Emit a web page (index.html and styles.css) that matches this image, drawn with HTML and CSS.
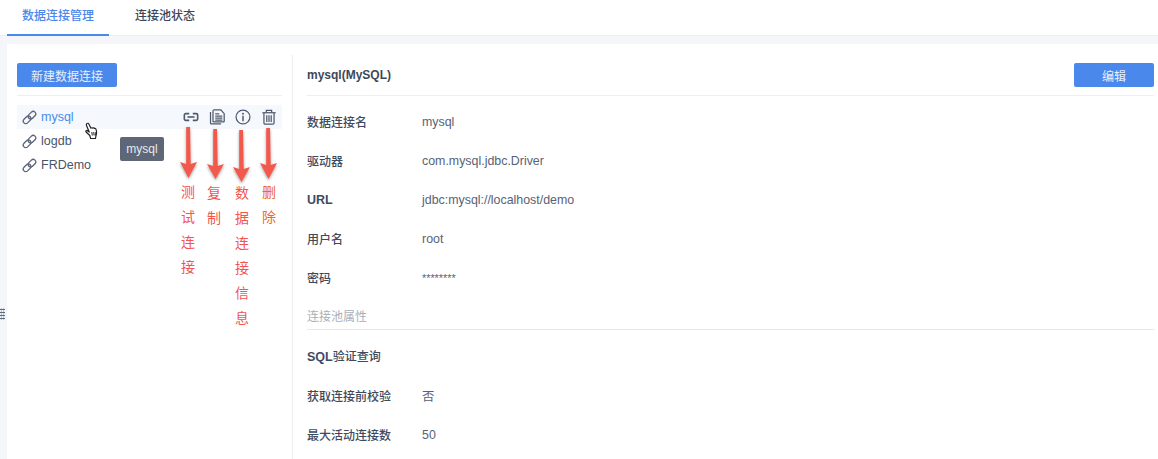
FILE: index.html
```html
<!DOCTYPE html>
<html lang="zh">
<head>
<meta charset="utf-8">
<title>数据连接管理</title>
<link rel="stylesheet" href="styles.css">
</head>
<body>
<svg class="defs" width="0" height="0" aria-hidden="true">
  <defs>
    <symbol id="chain" viewBox="0 0 16 16">
      <g fill="none" stroke="currentColor" stroke-width="1.400">
        <rect x="0.800" y="7.800" width="9.200" height="5.400" rx="2.700" transform="rotate(-45 5.400 10.500)"/>
        <rect x="6" y="2.800" width="9.200" height="5.400" rx="2.700" transform="rotate(-45 10.600 5.500)"/>
      </g>
    </symbol>
    <filter id="soft" x="-60%" y="-20%" width="220%" height="140%">
      <feDropShadow dx="0" dy="1.500" stdDeviation="1.500" flood-color="#555" flood-opacity=".6"/>
    </filter>
  </defs>
</svg>

<nav class="tabs">
  <a class="tab tab-active">数据连接管理</a>
  <a class="tab">连接池状态</a>
</nav>

<main class="page">
  <span class="grip" aria-hidden="true"></span>
  <section class="sidebar">
    <div class="side-head">
      <button class="btn btn-new">新建数据连接</button>
    </div>
    <ul class="conn-list">
      <li class="conn conn-active">
        <svg class="chain"><use href="#chain"/></svg>
        <span class="conn-name">mysql</span>
        <span class="actions">
          <svg class="act" viewBox="0 0 18 18"><g fill="none" stroke="currentColor" stroke-width="1.800"><path d="M7 5.200H3a1.500 1.500 0 0 0-1.500 1.500v4.600A1.500 1.500 0 0 0 3 12.800h4"/><path d="M11 5.200h4a1.500 1.500 0 0 1 1.500 1.500v4.600a1.500 1.500 0 0 1-1.500 1.500h-4"/><path d="M5 9h8"/></g></svg>
          <svg class="act" viewBox="0 0 18 18"><g fill="none" stroke="currentColor" stroke-width="1.400"><path d="M1.700 3.500v12.300a1 1 0 0 0 1 1H13.500"/><path d="M4.500 1.300v12.500a.8.8 0 0 0 .8.8h11a.8.8 0 0 0 .8-.8V5.200L13.300 1H4.800"/><path d="M7 5.500h4.500M7 8h8M7 10.300h8M7 12.500h8" stroke-width="1.300"/></g></svg>
          <svg class="act" viewBox="0 0 18 18"><circle cx="9" cy="9" r="7.800" fill="none" stroke="currentColor" stroke-width="1.400"/><circle cx="9" cy="5.300" r="1.100" fill="currentColor"/><path d="M9 7.700v6" stroke="currentColor" stroke-width="1.700"/></svg>
          <svg class="act" viewBox="0 0 18 18"><g fill="none" stroke="currentColor" stroke-width="1.400"><path d="M1.500 4.200h15"/><path d="M6 4V1.500h6V4"/><path d="M3.300 4.500v11.300a1.300 1.300 0 0 0 1.300 1.300h8.800a1.300 1.300 0 0 0 1.300-1.300V4.500"/><path d="M6.500 7v7.500M9 7v7.500M11.500 7v7.500"/></g></svg>
        </span>
      </li>
      <li class="conn">
        <svg class="chain"><use href="#chain"/></svg>
        <span class="conn-name">logdb</span>
      </li>
      <li class="conn">
        <svg class="chain"><use href="#chain"/></svg>
        <span class="conn-name">FRDemo</span>
      </li>
    </ul>
  </section>

  <section class="detail">
    <header class="detail-head">
      <h2 class="detail-title">mysql(MySQL)</h2>
      <button class="btn btn-edit">编辑</button>
    </header>
    <dl class="fields">
      <div class="field"><dt>数据连接名</dt><dd>mysql</dd></div>
      <div class="field"><dt>驱动器</dt><dd>com.mysql.jdbc.Driver</dd></div>
      <div class="field"><dt><b class="latin">URL</b></dt><dd>jdbc:mysql://localhost/demo</dd></div>
      <div class="field"><dt>用户名</dt><dd>root</dd></div>
      <div class="field"><dt>密码</dt><dd class="mask">********</dd></div>
    </dl>
    <h3 class="section-title">连接池属性</h3>
    <dl class="fields">
      <div class="field field-first"><dt><b class="latin">SQL</b>验证查询</dt><dd></dd></div>
      <div class="field"><dt>获取连接前校验</dt><dd>否</dd></div>
      <div class="field"><dt>最大活动连接数</dt><dd>50</dd></div>
    </dl>
  </section>
</main>

<div class="tooltip">mysql</div>

<svg class="cursor" viewBox="0 0 14 18" aria-hidden="true">
  <path d="M1.800 1.600c.8-.7 1.800-.3 2.200.6l1.900 4c.5-.6 1.400-.6 1.800 0 .5-.5 1.400-.4 1.800.3.600-.3 1.300 0 1.500.7.700 2 .8 4 .1 5.800l-.6 3.500H5.700L4.800 13.500 1.100 10c-.7-.9.400-2 1.400-1.200l1.700 1.300L1.500 3.600c-.2-.8-.2-1.500.3-2z" fill="#fff" stroke="#222" stroke-width="1.200" stroke-linejoin="round"/>
  <path d="M6.800 10l.5 3.500M8.800 10l.3 3.500M10.800 10.200l-.1 3.300" stroke="#222" stroke-width="1"/>
</svg>

<svg class="arrows" viewBox="0 0 110 62" aria-hidden="true">
  <g fill="#f3594d" filter="url(#soft)">
    <path d="M6.200 1H10l.7 37 6.300-2L8.500 52 0 36l6.200 2z"/>
    <path d="M33.200 3H37l.7 37 6.300-2-8.500 15L27 38l6.200 2z"/>
    <path d="M59.200 4H63l.7 39 6.300-2-8.500 15L53 41l6.200 2z"/>
    <path d="M86.200 2H90l.7 37 6.300-2-8.500 16L80 37l6.200 2z"/>
  </g>
</svg>

<div class="note note-a">测试连接</div>
<div class="note note-b">复制</div>
<div class="note note-c">数据连接信息</div>
<div class="note note-d">删除</div>
</body>
</html>
```

FILE: styles.css
```css
* { box-sizing: border-box; }
html, body { margin: 0; height: 100%; }
body {
  position: relative;
  width: 1158px;
  height: 459px;
  overflow: hidden;
  background: #f5f6f9;
  color: #4a5468;
  font-family: "Liberation Sans", "Noto Sans CJK SC", sans-serif;
  font-size: 13px;
}
.defs { position: absolute; }

.tabs {
  display: flex;
  height: 36px;
  padding-left: 7px;
  background: #fff;
  border-bottom: 1px solid #eceef2;
}
.tab {
  display: block;
  height: 36px;
  padding: 0 15px 0 16px;
  margin-right: 10px;
  line-height: 32px;
  font-size: 12px;
  color: #3c4658;
  font-weight: 500;
}
.tab-active {
  width: 102px;
  padding: 0 0 0 15px;
  color: #4a88ec;
  border-bottom: 2px solid #4a88ec;
}

.page {
  display: flex;
  height: 415px;
  margin: 8px 0 0 7px;
  background: #fff;
  overflow: hidden;
}
.grip {
  position: absolute;
  left: 0;
  top: 308px;
  width: 5px;
  height: 12px;
  background-image: radial-gradient(circle, #5f6b80 0.9px, transparent 1.1px);
  background-size: 2.500px 3px;
}

.sidebar {
  width: 285px;
  flex: none;
  padding: 19px 10px 0;
}
.side-head {
  height: 33px;
  border-bottom: 1px solid #eceef2;
}
.btn {
  display: block;
  height: 24px;
  padding: 0;
  border: 0;
  border-radius: 2px;
  background: #4a88ec;
  color: #e8f0fd;
  font: inherit;
  font-size: 12px;
}
.btn-new { width: 100px; }
.btn-edit { width: 80px; }

.conn-list {
  list-style: none;
  margin: 9px 0 0;
  padding: 0;
}
.conn {
  display: flex;
  align-items: center;
  height: 24px;
  padding-left: 5px;
  font-size: 12.500px;
  color: #4a5468;
}
.conn-active { background: #f5f8fd; }
.conn-active .conn-name { color: #4a88ec; }
.chain {
  width: 15px;
  height: 15px;
  margin-right: 4px;
  color: #5a6578;
  flex: none;
}
.actions {
  display: flex;
  gap: 10px;
  margin-left: auto;
  margin-right: 5px;
  color: #4f5a6e;
}
.act { width: 16px; height: 16px; display: block; }

.detail {
  flex: 1;
  margin-top: 11px;
  padding: 0 4px 0 14px;
  border-left: 1px solid #eceef2;
}
.detail-head {
  display: flex;
  align-items: center;
  justify-content: space-between;
  height: 41px;
  border-bottom: 1px solid #eceef2;
}
.detail-title {
  margin: 0;
  font-size: 12px;
  font-weight: 700;
  color: #3d4859;
}

.fields { margin: 0; }
.detail-head + .fields { padding-top: 6px; }
.field {
  display: flex;
  align-items: center;
  height: 39px;
  margin: 0;
}
.field-first { margin-bottom: 1px; }
.field dt {
  width: 115px;
  flex: none;
  font-weight: 500;
  font-size: 12px;
  color: #3f4a5e;
}
.latin { font-size: 12.500px; font-weight: 700; }
.field dd {
  margin: 0;
  font-size: 12.400px;
  color: #586276;
}
.field .mask { font-size: 10.800px; }
.section-title {
  margin: 0 0 6px;
  height: 33px;
  padding-top: 11px;
  line-height: 18px;
  font-size: 12px;
  font-weight: 400;
  color: #a9afba;
  border-bottom: 1px solid #e6e8ec;
}

.tooltip {
  position: absolute;
  left: 120px;
  top: 137px;
  width: 44px;
  height: 24px;
  border-radius: 2px;
  background: #5e6778;
  color: #e8eaee;
  font-size: 12px;
  line-height: 24px;
  text-align: center;
}
.cursor {
  position: absolute;
  left: 85px;
  top: 122px;
  width: 14px;
  height: 18px;
}
.arrows {
  position: absolute;
  left: 180px;
  top: 126px;
  width: 110px;
  height: 62px;
  overflow: visible;
}
.note {
  position: absolute;
  width: 14px;
  font-size: 14px;
  line-height: 25px;
  word-break: break-all;
  color: #f4544f;
}
.note-a { left: 181px; top: 180px; }
.note-b { left: 207px; top: 181px; }
.note-c { left: 235px; top: 181px; }
.note-d { left: 262px; top: 180px; color: #ea6a24; }
```
